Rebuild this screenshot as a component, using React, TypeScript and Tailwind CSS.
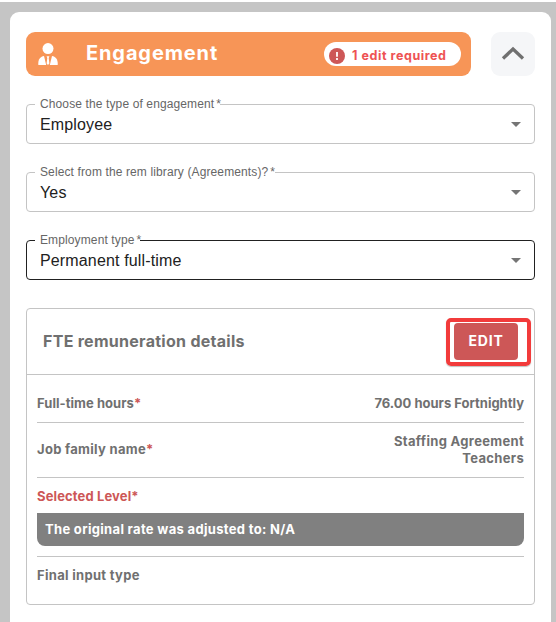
import type { ReactNode } from "react";

const geometric = "font-['Inter','Open_Sans',sans-serif]";

function PersonIcon() {
  return (
    <svg className="h-[22px] w-5 shrink-0" viewBox="0 0 20 22" fill="#fff">
      <circle cx="10" cy="5.600" r="5.500" />
      <path d="M.3 22v-1.800c0-4 2.300-6.700 5.700-7.200L8.200 22z" />
      <path d="M19.700 22v-1.800c0-4-2.300-6.700-5.700-7.200L11.800 22z" />
      <path d="M8.600 13.200h2.800l-.7 1.900.7 5.400L10 22l-1.400-1.500.7-5.400z" />
    </svg>
  );
}

function AlertIcon() {
  return (
    <svg className="mt-[3px] size-4 shrink-0" viewBox="0 0 16 16">
      <circle cx="8" cy="8" r="8" fill="#cd5757" />
      <path d="M7.100 4h1.800v4.800H7.100zM7.100 10h1.800v1.900H7.100z" fill="#fff" />
    </svg>
  );
}

type FieldProps = { label: string; value: string; notch: string; active?: boolean };

function SelectField({ label, value, notch, active }: FieldProps) {
  const line = active ? "border-[#212121]" : "border-[#c4c4c4]";
  return (
    <div
      className={`relative flex h-10 items-center justify-between rounded-[4px] border pr-[13px] pl-[13px] font-['Liberation_Sans',sans-serif] ${line}`}
    >
      <span className={`absolute -top-px left-2 h-px bg-white ${notch}`} />
      <span className="absolute -top-[9px] left-[13px] text-[12px] leading-4 tracking-[0.12px] whitespace-nowrap text-[#666]">
        {label}
        <span className="ml-[2px]">*</span>
      </span>
      <span className="pt-[2px] text-[16px] leading-6 tracking-[0.15px] text-[#212121]">{value}</span>
      <svg className="h-[5px] w-[10px]" viewBox="0 0 10 5">
        <path d="M0 0h10L5 5z" fill="#757575" />
      </svg>
    </div>
  );
}

function Star() {
  return <span className="text-[#cd5757]">*</span>;
}

function Row({ height, children }: { height: string; children: ReactNode }) {
  return (
    <div className={`flex items-center justify-between border-b border-[#c4c4c4] ${height}`}>
      {children}
    </div>
  );
}

export default function App() {
  return (
    <div className={`h-[622px] w-[556px] overflow-hidden bg-white pt-[2px] text-[#707070] ${geometric}`}>
      <div className="h-[620px] bg-[#c5c5c5] pt-[10px] pr-[5px] pl-[10px]">
        <main className="h-[620px] rounded-t-[9px] bg-white px-4 pt-5">
          <div className="flex gap-5">
            <header className="flex h-11 w-[445px] items-center rounded-[9px] bg-[#f79557] pr-[10px] pl-3">
              <PersonIcon />
              <h1 className="mb-[2px] ml-[28px] text-[20px] leading-6 font-bold tracking-[0.88px] text-white">
                Engagement
              </h1>
              <div className="ml-auto flex h-6 w-[137px] items-center rounded-full bg-white pl-[5px]">
                <AlertIcon />
                <span className="mt-[3px] ml-[7px] text-[12.500px] leading-4 font-bold tracking-[0.57px] whitespace-nowrap text-[#ee5253]">
                  1 edit required
                </span>
              </div>
            </header>
            <button className="flex size-11 items-center justify-center rounded-[9px] bg-[#f5f6f8]">
              <svg className="size-6" viewBox="0 0 24 24">
                <path d="M2 16.500 12 7l10 9.500" fill="none" stroke="#707070" strokeWidth="3.300" />
              </svg>
            </button>
          </div>

          <div className="mt-7 flex flex-col gap-7">
            <SelectField label="Choose the type of engagement" value="Employee" notch="w-[185px]" />
            <SelectField label="Select from the rem library (Agreements)?" value="Yes" notch="w-[240px]" />
            <SelectField label="Employment type" value="Permanent full-time" notch="w-[105px]" active />
          </div>

          <section className="mt-7 h-[297px] rounded-[4px] border border-[#c4c4c4] text-[13px] leading-[17px] font-bold">
            <div className="flex h-[66px] items-center justify-between border-b border-[#c4c4c4] pr-[3px] pb-[2px] pl-4">
              <h2 className="text-[16px] leading-6 tracking-[0.28px]">FTE remuneration details</h2>
              <div className="mt-[2px] h-12 w-[85px] rounded-[5px] border-[4px] border-[#f23b3b] pt-px pl-1 shadow-[0_1px_1px_#8888]">
                <button className="flex h-[37px] w-16 items-center justify-center rounded-[4px] bg-[#cd5757] pb-px text-[14px] tracking-[0.8px] text-white">
                  EDIT
                </button>
              </div>
            </div>
            <div className="px-[10px]">
              <Row height="h-12 pt-[10px]">
                <span className="tracking-[0.05px]">Full-time hours<Star /></span>
                <span>76.00 hours Fortnightly</span>
              </Row>
              <Row height="h-[55px]">
                <span className="mb-[2px] tracking-[0.3px]">Job family name<Star /></span>
                <span className="w-[140px] text-right tracking-[0.32px]">Staffing Agreement Teachers</span>
              </Row>
              <div className="h-[79px] border-b border-[#c4c4c4] pt-[10px]">
                <p className="tracking-[0.13px] text-[#cd5757]">Selected Level*</p>
                <p className="mt-2 flex h-[33px] items-center rounded-b-[8px] bg-[#808080] pl-2 tracking-[0.32px] text-white">
                  The original rate was adjusted to: N/A
                </p>
              </div>
              <p className="pt-[10px] tracking-[0.3px]">Final input type</p>
            </div>
          </section>
        </main>
      </div>
    </div>
  );
}
